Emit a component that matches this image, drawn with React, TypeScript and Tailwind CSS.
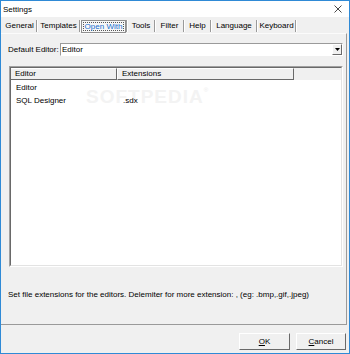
import React from 'react'

const font = { fontFamily: '"Liberation Sans", Arial, sans-serif' }

const tabs: { label: string; w: string; active?: boolean }[] = [
  { label: 'General', w: 'w-[33px]' },
  { label: 'Templates', w: 'w-[41px]' },
  { label: 'Open With', w: 'w-[45px]', active: true },
  { label: 'Tools', w: 'w-[26px]' },
  { label: 'Filter', w: 'w-[27px]' },
  { label: 'Help', w: 'w-[25px]' },
  { label: 'Language', w: 'w-[44px]' },
  { label: 'Keyboard', w: 'w-[37px]' },
]

function TitleBar() {
  return (
    <div className="h-[16px] bg-white flex items-center justify-between pl-[2px] pr-[7px]">
      <span className="text-[8px] text-black leading-none mt-[1px]">Settings</span>
      <svg width="8" height="8" viewBox="0 0 8 8">
        <path d="M0.5 0.5 L7.5 7.5 M7.5 0.5 L0.5 7.5" stroke="#333" strokeWidth="0.9" />
      </svg>
    </div>
  )
}

function TabStrip() {
  return (
    <div className="h-[16px] flex items-start pt-[3px] pl-[2px]">
      {tabs.map((t) => (
        <div key={t.label} className="flex items-start">
          {t.active ? (
            <div className={`${t.w} h-[13px] border border-[#8f8f8f] bg-[#f7f7f7] p-[1px]`}>
              <div className="h-full border border-dotted border-[#555] flex items-center justify-center">
                <span className="text-[8px] leading-none text-[#1a6fd0]">{t.label}</span>
              </div>
            </div>
          ) : (
            <div className={`${t.w} h-[12px] flex items-center justify-center`}>
              <span className="text-[8px] leading-none text-black">{t.label}</span>
            </div>
          )}
          <div className="w-[2px] h-[12px] border-l border-[#9a9a9a] bg-white" />
        </div>
      ))}
    </div>
  )
}

function ComboRow() {
  return (
    <div className="flex items-center mt-[9px] pl-[7px] pr-[3px]">
      <span className="w-[52px] text-[8px] leading-none text-black">Default Editor:</span>
      <div className="flex-1 h-[13px] border border-t-[#9a9a9a] border-l-[#9a9a9a] border-b-white border-r-white bg-white flex items-center">
        <span className="flex-1 pl-[1px] text-[8px] leading-none text-black">Editor</span>
        <div className="w-[10px] h-[11px] bg-[#f0f0f0] border border-t-white border-l-white border-b-[#696969] border-r-[#696969] flex items-center justify-center">
          <svg width="5" height="3" viewBox="0 0 5 3">
            <path d="M0 0 H5 L2.5 3 Z" fill="#000" />
          </svg>
        </div>
      </div>
    </div>
  )
}

function ListView() {
  return (
    <div className="mt-[10px] ml-[8px] mr-[3px] h-[201px] border border-t-[#a0a0a0] border-l-[#a0a0a0] border-b-white border-r-white">
      <div className="relative h-full border border-t-[#696969] border-l-[#696969] border-b-[#e3e3e3] border-r-[#e3e3e3] bg-white flex flex-col">
        <div className="absolute left-[75px] top-[19px] flex items-start pointer-events-none">
          <span className="text-[19px] font-bold tracking-[1px] leading-none text-[#f3f3f3]">SOFTPEDIA</span>
          <span className="text-[6px] leading-none text-[#ededed]">®</span>
        </div>
        <div className="relative h-[12px] flex bg-[#f0f0f0]">
          <div className="w-[106px] border-r border-b border-[#696969] border-t border-t-white flex items-center pl-[4px]">
            <span className="text-[8px] leading-none text-black">Editor</span>
          </div>
          <div className="w-[177px] border-r border-b border-[#696969] border-t border-t-white border-l border-l-white flex items-center pl-[4px]">
            <span className="text-[8px] leading-none text-black">Extensions</span>
          </div>
          <div className="flex-1" />
        </div>
        <div className="relative flex flex-col pt-[1px]">
          <div className="h-[13px] flex items-center">
            <span className="w-[107px] pl-[5px] text-[8px] leading-none text-black">Editor</span>
          </div>
          <div className="h-[13px] flex items-center">
            <span className="w-[107px] pl-[5px] text-[8px] leading-none text-black">SQL Designer</span>
            <span className="pl-[5px] text-[8px] leading-none text-black">.sdx</span>
          </div>
        </div>
      </div>
    </div>
  )
}

function Panel() {
  return (
    <div className="h-[292px] mr-[2px] border-r border-b border-[#9a9a9a] border-t border-t-[#fbfbfb] flex flex-col">
      <ComboRow />
      <ListView />
      <div className="mt-[17px] pl-[7px] leading-none">
        <span className="text-[8px] leading-none text-black">
          Set file extensions for the editors. Delemiter for more extension: , (eg: .bmp,.gif,.jpeg)
        </span>
      </div>
    </div>
  )
}

function DialogButton({ hot, rest, w }: { hot: string; rest: string; w: string }) {
  return (
    <div className={`${w} h-[17px] border border-t-white border-l-white border-b-[#696969] border-r-[#696969] bg-[#f0f0f0] flex items-center justify-center`}>
      <span className="text-[8px] leading-none text-black">
        <span className="underline">{hot}</span>
        {rest}
      </span>
    </div>
  )
}

export default function App() {
  return (
    <div style={font} className="w-[350px] h-[354px] border border-[#2f8ad6] bg-[#f0f0f0] flex flex-col">
      <TitleBar />
      <TabStrip />
      <Panel />
      <div className="flex-1 flex justify-end items-start pt-[8px] pr-[3px] gap-[6px]">
        <DialogButton hot="O" rest="K" w="w-[51px]" />
        <DialogButton hot="C" rest="ancel" w="w-[50px]" />
      </div>
    </div>
  )
}
